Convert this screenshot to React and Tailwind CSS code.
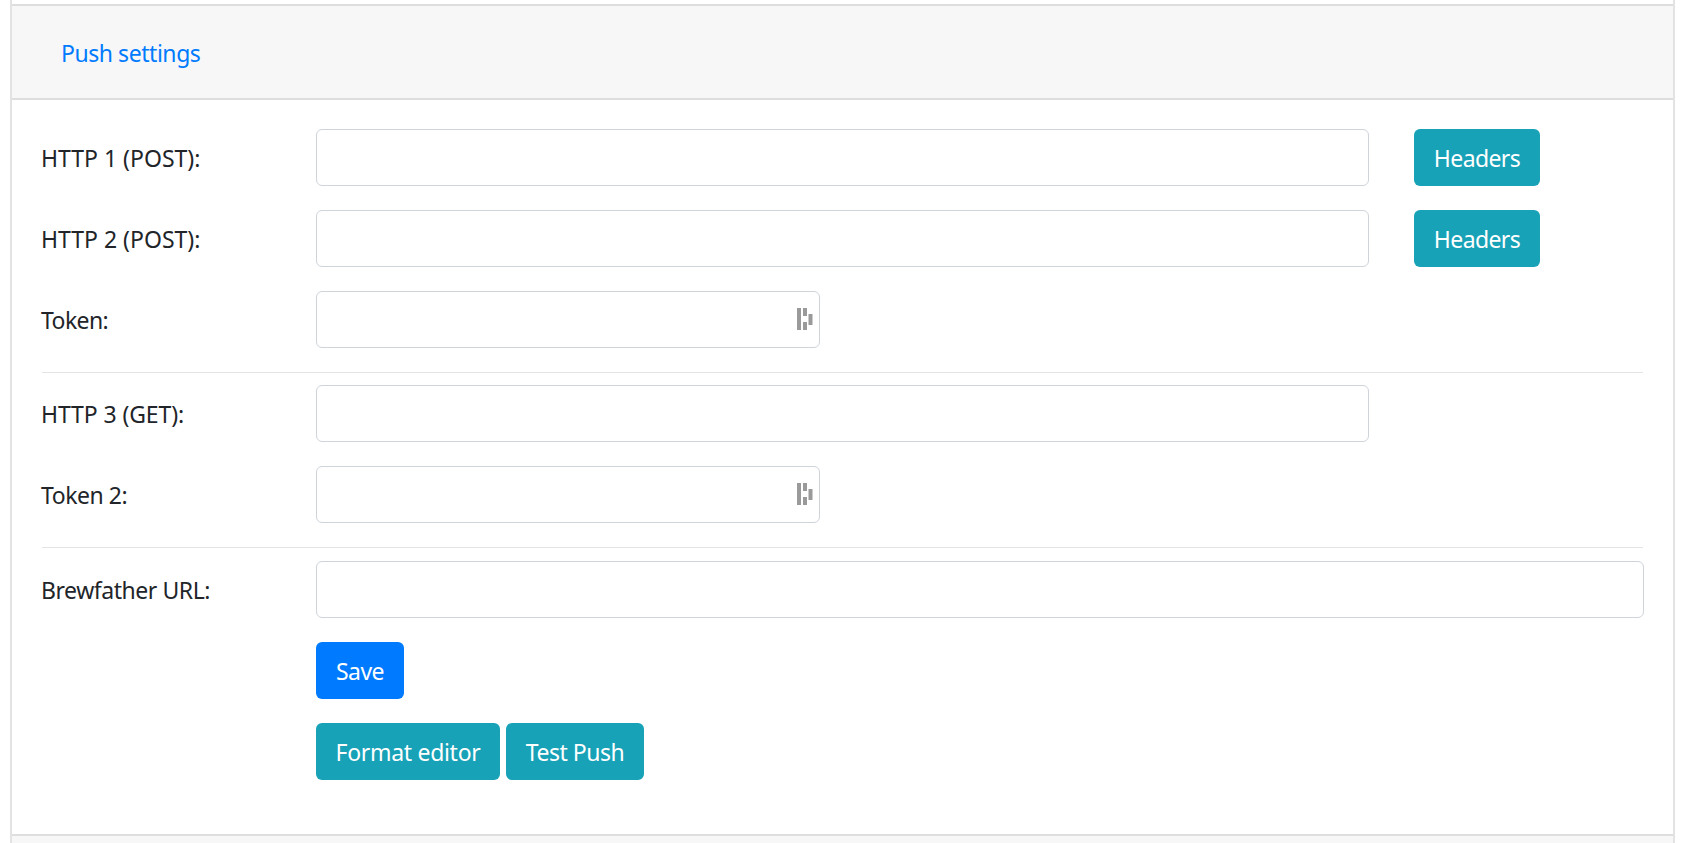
const font = { fontFamily: '"Noto Sans", sans-serif' };

function Btn({ children, color = "bg-[#17a2b8]", w, track = "tracking-[-0.6px]" }) {
  return (
    <button className={`h-[57px] pt-[2px] rounded-[6px] ${color} ${w} ${track} text-white text-[23px] flex items-center justify-center shrink-0`}>
      {children}
    </button>
  );
}

function Input({ w, icon }) {
  return (
    <div className={`relative h-[57px] ${w} rounded-[6px] border border-[#ced4da] bg-white shrink-0`}>
      {icon && (
        <svg className="absolute left-[480px] top-[16px]" width="16" height="23" viewBox="0 0 16 23" fill="#9a9a9a">
          <rect x="0" y="0" width="4" height="22" />
          <rect x="6" y="0" width="4" height="8" />
          <rect x="6" y="14" width="4" height="8" />
          <rect x="11.5" y="6" width="4" height="11" />
        </svg>
      )}
    </div>
  );
}

function Row({ label, w, icon, children, last, track = "tracking-[-0.6px]" }) {
  return (
    <div className={`flex items-center ${last ? "" : "mb-6"}`}>
      <div className={`w-[274px] shrink-0 pt-[2px] -ml-[1px] mr-[1px] text-[23px] text-[#212529] ${track}`}>{label}</div>
      <Input w={w} icon={icon} />
      {children}
    </div>
  );
}

export default function App() {
  return (
    <div style={font} className="h-[843px] w-full overflow-hidden bg-white pl-[10px] pr-[9px]">
      <div className="h-[900px] border-x-2 border-[#e3e3e3] pt-[4px] flex flex-col">
        <div className="h-[96px] shrink-0 bg-[#f7f7f7] border-y-2 border-[#dedede] pl-[49px] flex items-center">
          <span className="pt-[2px] text-[23px] tracking-[-0.45px] text-[#007bff]">Push settings</span>
        </div>
        <div className="h-[734px] shrink-0 pt-[29px] pl-[30px] pr-[30px]">
          <Row label="HTTP 1 (POST):" w="w-[1053px]" track="tracking-[0px]">
            <div className="ml-[45px]"><Btn w="w-[126px]">Headers</Btn></div>
          </Row>
          <Row label="HTTP 2 (POST):" w="w-[1053px]" track="tracking-[0px]">
            <div className="ml-[45px]"><Btn w="w-[126px]">Headers</Btn></div>
          </Row>
          <Row label="Token:" w="w-[504px]" icon />
          <div className="border-t border-[#e4e4e4] mb-3" />
          <Row label="HTTP 3 (GET):" w="w-[1053px]" track="tracking-[-0.1px]" />
          <Row label="Token 2:" w="w-[504px]" icon track="tracking-[-0.45px]" />
          <div className="border-t border-[#e4e4e4] mb-[13px]" />
          <Row label="Brewfather URL:" w="w-[1328px]" track="tracking-[-0.45px]" />
          <div className="pl-[274px]">
            <div className="mb-6"><Btn color="bg-[#007bff]" w="w-[88px]">Save</Btn></div>
            <div className="flex gap-[6px]">
              <Btn w="w-[184px]" track="tracking-[-0.3px]">Format editor</Btn>
              <Btn w="w-[138px]" track="tracking-[-0.5px]">Test Push</Btn>
            </div>
          </div>
        </div>
        <div className="flex-1 bg-[#f7f7f7] border-t-2 border-[#dedede]" />
      </div>
    </div>
  );
}
